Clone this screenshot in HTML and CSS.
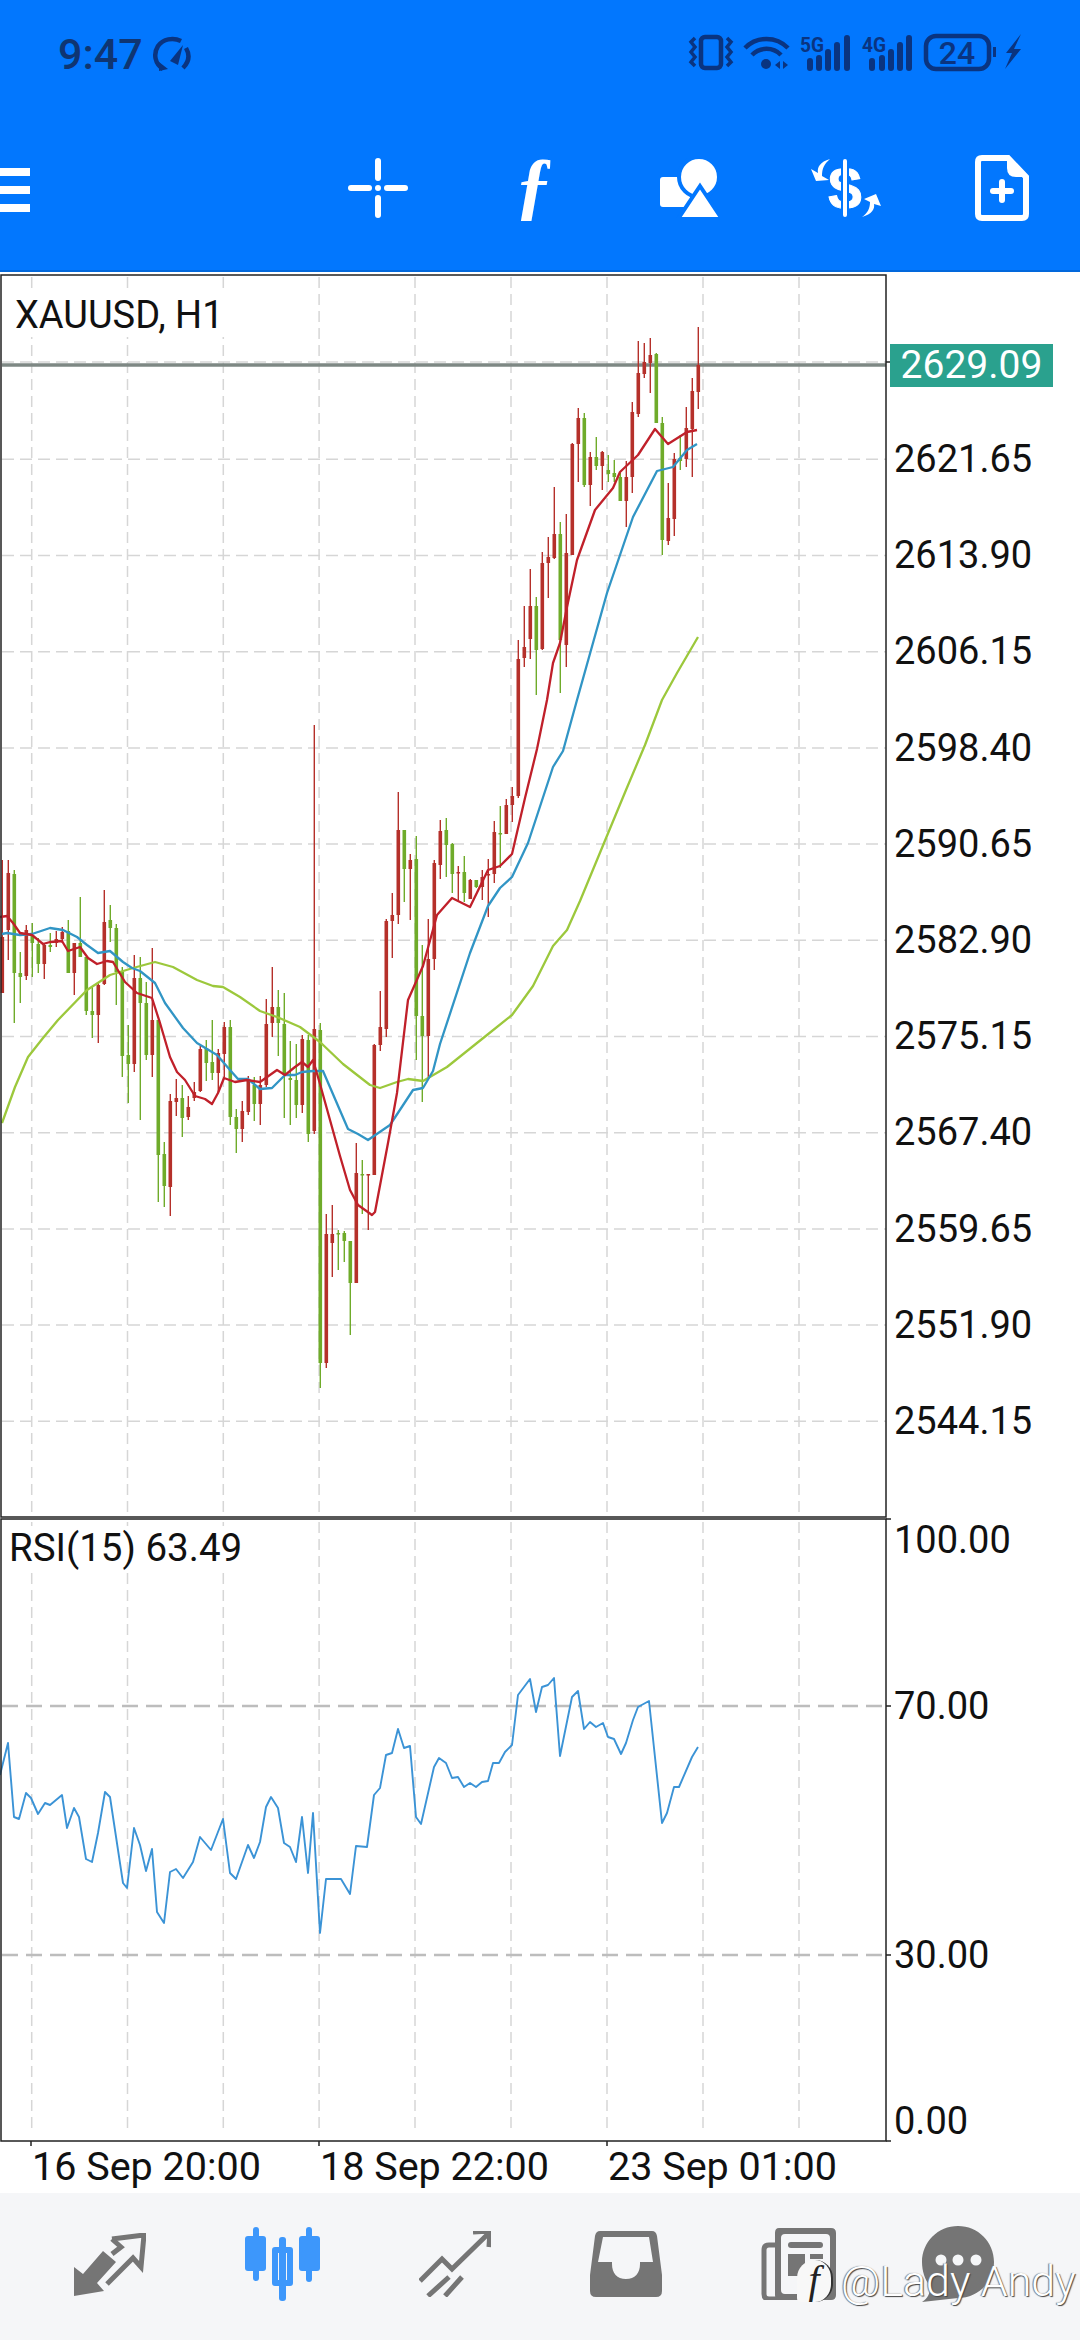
FILE: index.html
```html
<!DOCTYPE html>
<html lang="en">
<head>
    <meta charset="UTF-8">
    <meta name="viewport" content="width=device-width, initial-scale=1.0">
    <title>XAUUSD, H1</title>
    <link rel="stylesheet" href="styles.css">
</head>
<body>
    <header class="top">
        <div class="status-bar">
            <span class="clock">9:47</span>
            <svg class="gauge" viewBox="0 0 40 36" width="40" height="36">
                <path d="M11 33 C3 28 1 18 6 10 C11 3 21 1 29 5" class="status-line"/>
                <path d="M34 12 C38 19 37 26 31 32" class="status-line"/>
                <path d="M18 25 L31 9 L26 29 Z" class="status-fill"/>
                <path d="M7 26 L16 33 L7 35 Z" class="status-fill"/>
            </svg>
            <svg class="status-icons" viewBox="0 0 350 60" width="350" height="60">
                <rect x="21" y="13" width="20" height="31" rx="4" class="status-line"/>
                <path d="M15 14 l-4 4 4 5 -4 5 4 5 -4 5 4 4" class="status-thin"/>
                <path d="M47 14 l4 4 -4 5 4 5 -4 5 4 5 -4 4" class="status-thin"/>
                <path d="M65 24 A30 30 0 0 1 108 24" class="status-line"/>
                <path d="M72 31 A20 20 0 0 1 101 31" class="status-line"/>
                <circle cx="86" cy="40" r="5" class="status-fill"/>
                <path d="M100 37 L95 41 L100 45 Z M103 37 L108 41 L103 45 Z" class="status-fill"/>
                <text x="120" y="28" class="net-text" textLength="24" lengthAdjust="spacingAndGlyphs">5G</text>
                <path d="M130 37 V44 M139 34 V44 M148 28 V44 M157 21 V44 M167 14 V44" class="status-bars"/>
                <text x="182" y="28" class="net-text" textLength="24" lengthAdjust="spacingAndGlyphs">4G</text>
                <path d="M192 37 V44 M202 34 V44 M211 28 V44 M220 21 V44 M229 14 V44" class="status-bars"/>
                <rect x="246" y="12" width="63" height="33" rx="10" class="status-line"/>
                <text x="277" y="40" class="battery-text">24</text>
                <rect x="313" y="23" width="3" height="10" class="status-fill"/>
                <path d="M341 10 L326 29 L332 29 L325 45 L341 25 L334 25 Z" class="status-fill"/>
            </svg>
        </div>
        <div class="toolbar">
            <svg class="menu-icon" viewBox="0 0 30 44" width="30" height="44">
                <rect y="0" width="30" height="8"/>
                <rect y="18" width="30" height="8"/>
                <rect y="36" width="30" height="8"/>
            </svg>
            <div class="tools">
                <div class="tool">
                    <svg viewBox="0 0 60 60" width="60" height="60">
                        <rect x="27" y="0" width="6" height="23" rx="3"/>
                        <rect x="27" y="37" width="6" height="23" rx="3"/>
                        <rect x="0" y="27" width="24" height="6" rx="3"/>
                        <rect x="36" y="27" width="24" height="6" rx="3"/>
                        <circle cx="30" cy="30" r="3"/>
                    </svg>
                </div>
                <div class="tool"><span class="func">ƒ</span></div>
                <div class="tool">
                    <svg viewBox="20 13 60 60" width="60" height="60">
                        <rect x="20" y="32" width="30" height="30" rx="3"/>
                        <circle cx="59" cy="32" r="20" class="cut"/>
                        <path d="M60 41 L82 74 L38 74 Z" class="cut"/>
                    </svg>
                </div>
                <div class="tool">
                    <svg viewBox="169 7 74 74" width="74" height="74">
                        <text x="205" y="65" class="dollar">$</text>
                        <rect x="202" y="14" width="6" height="60" rx="3" class="dollar-bar"/>
                        <path d="M190 15 C180 18 177 23 178 29 L171 25 L176 37 L189 36 L182 32 C182 25 184 20 190 15 Z"/>
                        <path d="M222 73 C232 70 235 65 234 60 L241 62 L236 50 L224 55 L230 58 C230 64 228 69 222 73 Z"/>
                    </svg>
                </div>
                <div class="tool">
                    <svg viewBox="335 11 54 66" width="54" height="66">
                        <path d="M342 14 H368 L386 33 V70 Q386 74 382 74 H342 Q338 74 338 70 V18 Q338 14 342 14 Z" class="doc"/>
                        <path d="M367 13 V24 Q367 33 376 33 H387 Z"/>
                        <rect x="350" y="44" width="24" height="6" rx="3"/>
                        <rect x="359" y="35" width="6" height="24" rx="3"/>
                    </svg>
                </div>
            </div>
        </div>
    </header>

    <main>
        <section class="pane price-pane">
            <svg id="price-chart" class="plot" viewBox="0 272 890 1246" width="890" height="1246"></svg>
            <span class="pane-title pair-title">XAUUSD, H1</span>
            <div class="axis price-axis">
                <span class="last-price">2629.09</span>
                <span class="price">2621.65</span>
                <span class="price">2613.90</span>
                <span class="price">2606.15</span>
                <span class="price">2598.40</span>
                <span class="price">2590.65</span>
                <span class="price">2582.90</span>
                <span class="price">2575.15</span>
                <span class="price">2567.40</span>
                <span class="price">2559.65</span>
                <span class="price">2551.90</span>
                <span class="price">2544.15</span>
            </div>
        </section>
        <section class="pane rsi-pane">
            <svg id="rsi-chart" class="plot" viewBox="0 1518 890 623" width="890" height="623"></svg>
            <span class="pane-title rsi-title">RSI(15) 63.49</span>
            <div class="axis rsi-axis">
                <span class="rsi-level">100.00</span>
                <span class="rsi-level level-70">70.00</span>
                <span class="rsi-level level-30">30.00</span>
                <span class="rsi-level level-0">0.00</span>
            </div>
        </section>
        <div class="time-axis">
            <span>16 Sep 20:00</span>
            <span>18 Sep 22:00</span>
            <span>23 Sep 01:00</span>
        </div>
    </main>

    <nav class="bottom-nav">
        <svg viewBox="14 15 72 63" width="72" height="63">
            <path d="M14 78 L14 49 L23 56 L43 33 L56 44 L37 65 L44 73 Z"/>
            <path d="M52 21 L84 17 L81 49 L73 40 L47 66 M52 21 L61 29 L52 36" class="nav-line"/>
        </svg>
        <svg class="nav-active" viewBox="184 9 75 74" width="75" height="74">
            <rect x="192" y="9" width="6" height="54" rx="3"/>
            <rect x="184" y="18" width="21" height="35" rx="3"/>
            <rect x="218" y="19" width="7" height="64" rx="3"/>
            <path d="M214 29 H229 Q232 29 232 32 V65 Q232 68 229 68 H214 Q211 68 211 65 V32 Q211 29 214 29 Z M217 35 V62 H226 V35 Z" fill-rule="evenodd"/>
            <rect x="245" y="9" width="6" height="55" rx="3"/>
            <rect x="238" y="18" width="21" height="35" rx="3"/>
        </svg>
        <svg viewBox="0 0 72 66" width="72" height="66">
            <path d="M1 50 L23 28 L33 38 L70 2 M54 1 L71 0 L70 16 M9 65 L30 46 M26 65 L43 46" class="nav-line"/>
        </svg>
        <svg viewBox="0 0 72 66" width="72" height="66">
            <path fill-rule="evenodd" d="M10 0 H62 Q66 0 67 5 L72 44 V60 Q72 66 66 66 H6 Q0 66 0 60 V44 L5 5 Q6 0 10 0 Z M13 6 H59 L63 31 H50 V33 C50 42 45 48 36 48 C27 48 22 42 22 33 V31 H8 Z"/>
        </svg>
        <svg viewBox="13 9 76 72" width="76" height="72">
            <path fill-rule="evenodd" d="M31 9 H83 Q88 9 88 14 V76 Q88 81 83 81 H31 Q27 81 27 76 V14 Q27 9 31 9 Z M37 15 Q33 15 33 19 V71 Q33 75 37 75 H78 Q82 75 82 71 V19 Q82 15 78 15 Z"/>
            <path d="M27 26 H21 Q16 26 16 31 V75 Q16 80 21 80 H31" class="nav-line"/>
            <rect x="40" y="23" width="35" height="6" rx="3"/>
            <rect x="40" y="35" width="17" height="22"/>
            <rect x="62" y="35" width="13" height="5"/>
            <rect x="62" y="45" width="13" height="5"/>
        </svg>
        <svg class="nav-chat" viewBox="172 8 72 76" width="72" height="76">
            <path d="M208 8 C228 8 244 24 244 44 C244 64 228 80 208 80 L172 84 C178 80 180 76 180 68 C175 62 172 53 172 44 C172 24 188 8 208 8 Z"/>
            <circle cx="191" cy="42" r="5.5" class="nav-dot"/>
            <circle cx="208" cy="42" r="5.5" class="nav-dot"/>
            <circle cx="226" cy="42" r="5.5" class="nav-dot"/>
        </svg>
        <div class="watermark">
            <span class="watermark-logo">f</span>
            <span class="watermark-name">@Lady Andy</span>
        </div>
    </nav>

    <script src="chart.js"></script>
</body>
</html>
```

FILE: styles.css
```css
* {
    box-sizing: border-box;
    margin: 0;
    padding: 0;
}

body {
    width: 1080px;
    height: 2340px;
    overflow: hidden;
    font-family: Roboto, sans-serif;
    background-color: #fff;
    color: #111;
}

/* barra azul */
.top {
    height: 272px;
    background-color: #0277fe;
    border-bottom: 2px solid #0268dc;
}

.status-bar {
    height: 106px;
    display: flex;
    align-items: center;
    padding: 2px 50px 0 58px;
}

.clock {
    font-size: 43px;
    font-weight: 500;
    color: #0f3572;
}

.gauge {
    margin-left: 9px;
}

.status-icons {
    margin-left: auto;
}

.status-line {
    fill: none;
    stroke: #0a3480;
    stroke-width: 4.5;
}

.status-thin {
    fill: none;
    stroke: #0a3480;
    stroke-width: 3.5;
}

.status-fill {
    fill: #0a3480;
}

.status-bars {
    fill: none;
    stroke: #0a3480;
    stroke-width: 6;
    stroke-linecap: round;
}

.net-text {
    font-family: Roboto, sans-serif;
    font-size: 20px;
    font-weight: 700;
    fill: #0a3480;
}

.battery-text {
    font-family: Roboto, sans-serif;
    font-size: 32px;
    font-weight: 500;
    fill: #0a3480;
    text-anchor: middle;
}

.toolbar {
    height: 164px;
    display: flex;
    align-items: center;
    justify-content: space-between;
}

.toolbar svg {
    fill: #fff;
}

.menu-icon {
    margin-top: 4px;
}

.tools {
    display: flex;
    width: 780px;
}

.tool {
    width: 156px;
    height: 70px;
    display: flex;
    align-items: center;
    justify-content: center;
}

.func {
    font-family: "Liberation Serif", serif;
    font-style: italic;
    font-weight: 700;
    font-size: 76px;
    line-height: 70px;
    margin-bottom: 8px;
    color: #fff;
}

.toolbar .cut {
    fill: #fff;
    stroke: #0277fe;
    stroke-width: 4;
}

.dollar {
    font-family: "Liberation Sans", sans-serif;
    font-size: 60px;
    font-weight: 700;
    text-anchor: middle;
    stroke: #fff;
    stroke-width: 1;
}

.toolbar .dollar-bar {
    fill: #fff;
    stroke: #0277fe;
    stroke-width: 2;
}

.toolbar .doc {
    fill: none;
    stroke: #fff;
    stroke-width: 6;
}

/* graficos */
.pane {
    display: flex;
    position: relative;
}

.price-pane {
    height: 1246px;
}

.rsi-pane {
    height: 623px;
}

.plot {
    display: block;
    flex: none;
    overflow: visible;
}

.pane-title {
    position: absolute;
    background-color: #fff;
    font-size: 38px;
    line-height: 44px;
    padding-right: 4px;
}

.pair-title {
    left: 15px;
    top: 21px;
}

.rsi-title {
    left: 9px;
    top: 8px;
    font-size: 38.5px;
}

.axis {
    display: flex;
    flex-direction: column;
    align-items: flex-start;
    flex: 1;
    padding-left: 4px;
    font-size: 38px;
    color: #111;
}

.price-axis {
    padding-top: 72px;
}

.rsi-axis {
    padding-top: 3px;
}

.last-price {
    width: 163px;
    height: 43px;
    margin-left: -4px;
    margin-bottom: 24px;
    background-color: #2aa18e;
    color: #fff;
    font-size: 39px;
    line-height: 43px;
    text-align: center;
}

.price {
    height: 96.2px;
    line-height: 96.2px;
}

.rsi-level {
    line-height: 38px;
}

.level-70 {
    margin-top: 128px;
}

.level-30 {
    margin-top: 211px;
}

.level-0 {
    margin-top: 128px;
}

.time-axis {
    height: 52px;
    display: flex;
    font-size: 39.5px;
    line-height: 52px;
    color: #111;
}

.time-axis span {
    width: 288px;
    padding-left: 32px;
    white-space: nowrap;
}

/* barra de baixo */
.bottom-nav {
    position: relative;
    height: 147px;
    background-color: #f5f6f8;
    display: flex;
    align-items: center;
    gap: 99px;
    padding: 0 0 5px 74px;
}

.bottom-nav svg {
    flex: none;
    fill: #757575;
}

.bottom-nav .nav-active {
    fill: #3d97fb;
}

.bottom-nav .nav-chat {
    margin-left: -14px;
}

.nav-line {
    fill: none;
    stroke: #757575;
    stroke-width: 5;
}

.nav-dot {
    fill: #f5f6f8;
}

.watermark {
    position: absolute;
    left: 797px;
    top: 66px;
    display: flex;
    align-items: center;
    gap: 8px;
}

.watermark-logo {
    width: 36px;
    height: 42px;
    border-radius: 18px 18px 18px 4px;
    background-color: #f8f8f8;
    border-right: 2px solid #333;
    font-family: "Liberation Serif", serif;
    font-style: italic;
    font-size: 40px;
    line-height: 40px;
    text-align: center;
    color: #222;
}

.watermark-name {
    font-size: 43px;
    font-weight: 300;
    line-height: 44px;
    color: #fff;
    text-shadow: 1px 1px 1px #444, -1px 0 1px #777;
    white-space: nowrap;
}
```

FILE: chart.js
```js
// [cor, topo pavio, fim pavio, topo corpo, fim corpo], um candle a cada 6px
const candles = [
    ['r', 860, 993, 937, 993], ['r', 860, 960, 873, 930], ['g', 870, 1023, 874, 973], ['g', 952, 1003, 973, 977],
    ['r', 925, 980, 930, 976], ['g', 923, 977, 935, 943], ['g', 938, 973, 944, 964], ['r', 943, 979, 945, 964],
    ['g', 933, 952, 945, 947], ['r', 931, 947, 939, 943], ['r', 927, 943, 932, 939], ['g', 920, 973, 931, 973],
    ['r', 943, 995, 943, 973], ['g', 897, 957, 943, 957], ['g', 957, 1015, 957, 1011], ['g', 987, 1038, 1011, 1015],
    ['r', 982, 1043, 985, 1015], ['r', 890, 985, 922, 984], ['g', 905, 942, 920, 928], ['g', 924, 1005, 928, 972],
    ['g', 967, 1077, 972, 1056], ['g', 1025, 1103, 1055, 1064], ['r', 955, 1072, 978, 1064], ['g', 957, 1120, 978, 1003],
    ['g', 982, 1060, 1003, 1055], ['r', 948, 1077, 1020, 1055], ['g', 1020, 1202, 1020, 1155], ['g', 1142, 1207, 1154, 1186],
    ['r', 1094, 1216, 1101, 1187], ['r', 1079, 1116, 1098, 1102], ['g', 1085, 1137, 1098, 1118], ['r', 1096, 1120, 1107, 1117],
    ['r', 1082, 1101, 1092, 1098], ['r', 1046, 1092, 1049, 1091], ['g', 1040, 1081, 1048, 1063], ['g', 1020, 1080, 1062, 1073],
    ['r', 1049, 1093, 1053, 1073], ['r', 1022, 1077, 1027, 1054], ['g', 1020, 1125, 1027, 1117], ['g', 1109, 1153, 1117, 1129],
    ['r', 1101, 1142, 1111, 1129], ['r', 1076, 1115, 1081, 1112], ['g', 1077, 1121, 1085, 1104], ['r', 1076, 1125, 1085, 1104],
    ['r', 999, 1087, 1024, 1085], ['r', 967, 1037, 1007, 1023], ['g', 990, 1056, 1007, 1023], ['g', 993, 1118, 1024, 1075],
    ['g', 1041, 1125, 1078, 1080], ['g', 1044, 1118, 1080, 1105], ['r', 1035, 1113, 1039, 1105], ['g', 1035, 1142, 1040, 1134],
    ['r', 725, 1134, 1029, 1131], ['g', 1023, 1388, 1030, 1363], ['r', 1214, 1368, 1234, 1363], ['r', 1205, 1277, 1234, 1243],
    ['g', 1230, 1270, 1233, 1234], ['g', 1231, 1262, 1233, 1241], ['g', 1241, 1335, 1241, 1283], ['r', 1143, 1283, 1173, 1283],
    ['g', 1160, 1214, 1174, 1175], ['r', 1174, 1230, 1174, 1175], ['r', 1044, 1175, 1045, 1175], ['r', 991, 1051, 1027, 1045],
    ['r', 919, 1037, 921, 1029], ['r', 893, 958, 915, 921], ['r', 792, 924, 830, 915], ['g', 830, 902, 830, 869],
    ['r', 854, 920, 860, 869], ['g', 836, 1060, 859, 1016], ['g', 945, 1102, 1016, 1036], ['r', 919, 1080, 959, 1036],
    ['r', 860, 970, 863, 959], ['r', 820, 879, 831, 865], ['g', 818, 877, 830, 845], ['g', 843, 893, 844, 874],
    ['r', 866, 902, 872, 873], ['g', 856, 902, 872, 893], ['r', 879, 899, 880, 899], ['g', 880, 888, 880, 887],
    ['r', 870, 900, 877, 887], ['r', 859, 917, 874, 875], ['r', 821, 883, 832, 874], ['g', 806, 868, 833, 834],
    ['r', 799, 834, 805, 834], ['r', 787, 822, 796, 805], ['r', 640, 798, 659, 796], ['r', 606, 667, 647, 658],
    ['r', 569, 659, 606, 639], ['g', 597, 695, 606, 650], ['r', 552, 650, 563, 649], ['r', 537, 598, 557, 563],
    ['r', 487, 559, 534, 558], ['g', 522, 693, 534, 640], ['r', 514, 667, 553, 645], ['r', 443, 555, 444, 555],
    ['r', 408, 482, 418, 444], ['g', 413, 487, 418, 485], ['r', 452, 506, 457, 485], ['g', 437, 470, 457, 466],
    ['r', 451, 490, 452, 466], ['g', 455, 482, 470, 474], ['g', 460, 482, 473, 477], ['g', 473, 501, 477, 501],
    ['r', 461, 527, 477, 501], ['r', 402, 493, 412, 477], ['r', 341, 417, 373, 414], ['r', 343, 378, 362, 374],
    ['r', 338, 393, 355, 363], ['g', 353, 423, 354, 423], ['g', 417, 555, 423, 540], ['r', 483, 545, 518, 541],
    ['r', 453, 536, 459, 519], ['g', 435, 470, 458, 461], ['r', 407, 467, 428, 459], ['r', 378, 477, 391, 429],
    ['r', 327, 409, 365, 392]
];

const redLine = '0,917 7,916 13,923 20,933 32,935 43,944 50,942 62,941 68,951 80,947 88,958 97,964 107,961 113,962 125,982 137,993 152,998 160,1023 170,1057 177,1072 185,1080 195,1096 205,1099 212,1104 218,1093 224,1078 235,1082 247,1080 260,1082 '
    + '277,1070 285,1075 295,1067 302,1062 308,1067 313,1060 320,1084 340,1156 350,1190 358,1205 372,1215 375,1212 388,1143 397,1093 408,1000 423,966 437,915 452,898 470,907 488,870 500,866 512,854 525,798 537,749 547,700 '
    + '553,663 560,643 567,607 577,560 595,510 613,488 620,472 638,455 655,429 668,444 687,432 697,430';

const blueLine = '2,934 7,933 20,935 32,934 50,928 63,930 77,937 87,945 98,953 110,951 123,962 132,968 140,971 155,983 165,1003 183,1028 197,1043 217,1055 230,1070 238,1079 248,1079 260,1089 272,1088 '
    + '285,1075 295,1075 302,1072 313,1071 323,1071 348,1129 358,1134 368,1140 390,1125 413,1090 423,1088 433,1071 440,1044 470,953 488,906 500,888 512,877 528,843 553,767 563,751 577,700 '
    + '607,593 633,517 657,471 673,467 687,450 697,444';

const greenLine = '2,1123 15,1087 28,1057 43,1038 58,1020 87,990 110,975 133,968 155,962 173,967 197,980 213,986 223,987 240,997 260,1011 277,1017 300,1027 '
    + '320,1042 343,1064 370,1085 380,1088 397,1082 408,1079 423,1081 447,1067 467,1051 487,1035 512,1015 533,986 553,946 567,930 580,901 '
    + '604,843 626,790 645,745 662,700 677,673 698,637';

const rsiLine = '0,1775 8,1743 14,1817 19,1819 26,1793 31,1798 38,1814 45,1803 50,1805 62,1795 67,1828 74,1808 79,1817 86,1859 92,1862 98,1833 105,1792 110,1797 123,1883 127,1888 134,1828 140,1845 146,1871 152,1849 157,1912 164,1923 170,1872 176,1869 183,1878 193,1862 200,1837 211,1850 223,1819 230,1873 236,1879 248,1845 254,1858 260,1842 266,1807 271,1797 278,1808 284,1843 290,1847 296,1862 302,1817 308,1873 313,1813 320,1933 326,1879 341,1879 350,1894 356,1846 367,1847 374,1795 380,1788 386,1755 392,1753 398,1729 404,1748 410,1746 416,1817 421,1824 434,1767 439,1758 446,1763 452,1778 458,1777 464,1787 470,1783 476,1787 482,1782 488,1781 493,1763 499,1763 505,1752 512,1745 518,1695 530,1679 536,1712 542,1687 548,1685 554,1678 560,1756 572,1697 578,1691 584,1729 590,1722 596,1727 603,1723 608,1737 614,1739 621,1754 626,1743 633,1720 638,1707 649,1701 662,1823 667,1813 674,1787 679,1787 692,1757 698,1747';

const gridX = [31.7, 127.5, 223.3, 319.1, 415, 511, 607, 703, 799];
const colors = { r: '#b5302a', g: '#6fab2a' };

function line(x1, y1, x2, y2, color, width, dash) {
    const dashAttr = dash ? ` stroke-dasharray="${dash}"` : '';
    return `<line x1="${x1}" y1="${y1}" x2="${x2}" y2="${y2}" stroke="${color}" stroke-width="${width}"${dashAttr}/>`;
}

function polyline(points, color, width) {
    return `<polyline points="${points}" fill="none" stroke="${color}" stroke-width="${width}" stroke-linejoin="round"/>`;
}

function verticalGrid(top, bottom) {
    return gridX.map(x => line(x, top, x, bottom, '#d6d6d6', 1.5, '11 6')).join('');
}

function renderPrice() {
    let html = verticalGrid(277, 1515);

    for (let i = 0; i < 11; i++) {
        const y = 459.3 + i * 96.2;
        html += line(2, y, 886, y, '#d6d6d6', 1.5, '12 6');
    }
    html += line(2, 362, 886, 362, '#d6d6d6', 1.5, '12 6');
    html += line(2, 365, 886, 365, '#7e8884', 3.5);
    html += line(886, 362, 890, 362, '#222', 1.5);

    candles.forEach((c, i) => {
        const x = 2.3 + i * 6;
        const color = colors[c[0]];
        html += line(x, c[1], x, c[2], color, 1.4);
        html += `<rect x="${x - 1.8}" y="${c[3]}" width="3.6" height="${Math.max(c[4] - c[3], 1.5)}" fill="${color}"/>`;
    });

    html += polyline(greenLine, '#9cc83c', 2.3);
    html += polyline(blueLine, '#3195c5', 2.3);
    html += polyline(redLine, '#c0202a', 2.3);
    html += '<rect x="1" y="275" width="885" height="1242" fill="none" stroke="#222" stroke-width="1.5"/>';

    document.getElementById('price-chart').innerHTML = html;
}

function renderRsi() {
    let html = verticalGrid(1522, 2134);

    html += line(2, 1706, 886, 1706, '#bdbdbd', 2.5, '16 8');
    html += line(2, 1955, 886, 1955, '#bdbdbd', 2.5, '16 8');
    html += polyline(rsiLine, '#3b93d6', 1.9);
    html += '<rect x="1" y="1519" width="885" height="622" fill="none" stroke="#222" stroke-width="1.5"/>';

    [1519, 1706, 1955, 2141].forEach(y => {
        html += line(886, y, 891, y, '#222', 1.5);
    });
    [31, 319, 607].forEach(x => {
        html += line(x, 2141, x, 2146, '#222', 1.5);
    });

    document.getElementById('rsi-chart').innerHTML = html;
}

renderPrice();
renderRsi();
```
